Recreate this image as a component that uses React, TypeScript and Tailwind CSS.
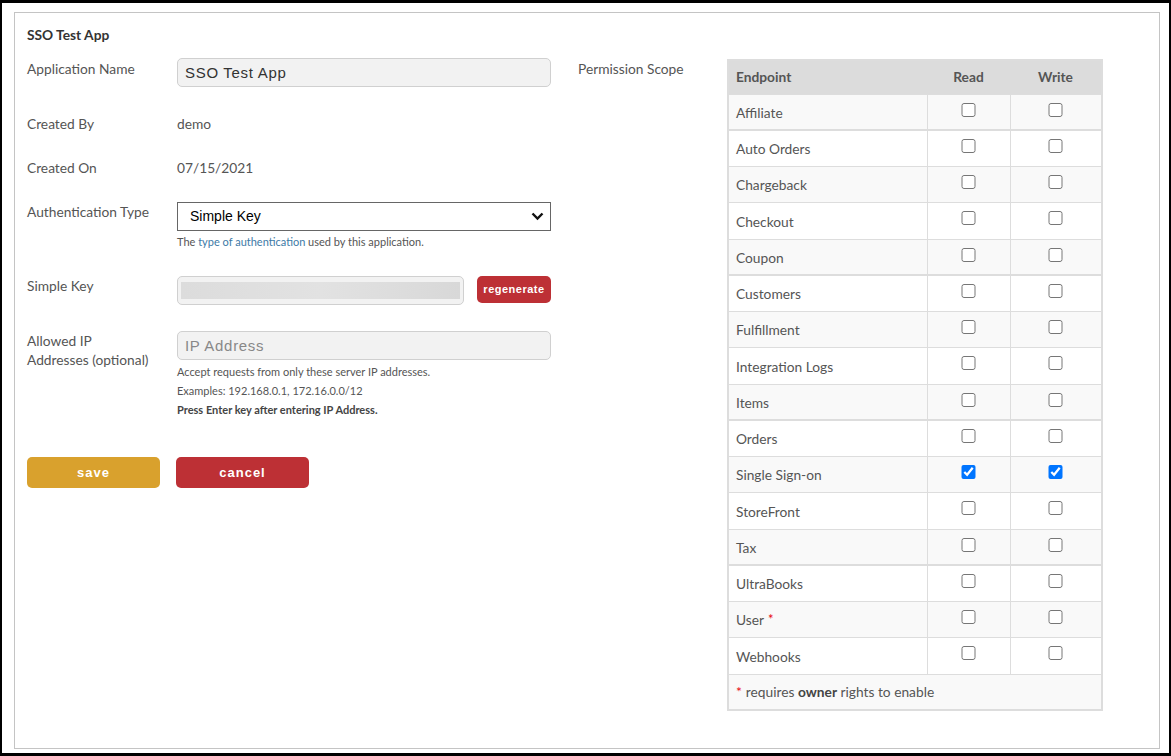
import { useState } from "react"

type Row = { name: string; read?: boolean; write?: boolean; owner?: boolean }

const groups: Row[][] = [
  [{ name: "Affiliate" }],
  [{ name: "Auto Orders" }, { name: "Chargeback" }, { name: "Checkout" }, { name: "Coupon" }],
  [{ name: "Customers" }, { name: "Fulfillment" }, { name: "Integration Logs" }, { name: "Items" }],
  [{ name: "Orders" }, { name: "Single Sign-on", read: true, write: true }, { name: "StoreFront" }, { name: "Tax" }],
  [{ name: "UltraBooks" }, { name: "User", owner: true }, { name: "Webhooks" }],
]

function Label({ children }: { children: React.ReactNode }) {
  return <div className="w-[150px] shrink-0 text-[13.75px] leading-5 text-[#555]">{children}</div>
}

function PermissionRow({ row, shaded, first }: { row: Row; shaded: boolean; first: boolean }) {
  const [read, setRead] = useState(!!row.read)
  const [write, setWrite] = useState(!!row.write)
  return (
    <tr className={`h-[36.25px] ${shaded ? "bg-[#f9f9f9]" : "bg-white"} ${first ? "border-t-2" : "border-t"} border-[#ddd]`}>
      <td className="border-r border-[#ddd] px-[7px] text-[13.75px] text-[#555] pt-[2px]">
        {row.name}
        {row.owner && <span className="text-red-600 ml-1 align-top text-[13px]">*</span>}
      </td>
      <td className="border-r border-[#ddd] text-center align-top pt-[8px]">
        <input type="checkbox" checked={read} onChange={() => setRead(!read)} className="m-0 w-[15px] h-[14px] align-top" />
      </td>
      <td className="text-center align-top pt-[8px]">
        <input type="checkbox" checked={write} onChange={() => setWrite(!write)} className="m-0 w-[15px] h-[14px] align-top" />
      </td>
    </tr>
  )
}

export default function App() {
  return (
    <div className="h-[756px] w-[1171px] bg-white border-x-2 border-y-[3px] border-black font-['Lato','Noto_Sans',sans-serif] overflow-hidden">
      <div className="ml-[12px] mr-[9px] mt-[9px] h-[737px] border border-[#c4c4c4] px-[12px] pt-[12px]">
        <div className="text-[13.75px] font-bold leading-5 text-[#333]">SSO Test App</div>

        <div className="flex gap-[27px] mt-[14px]">
          {/* Left form */}
          <div className="w-[524px] shrink-0">
            <div className="flex">
              <Label>Application Name</Label>
              <input
                defaultValue="SSO Test App"
                className="-mt-px h-[29px] w-[374px] rounded-[5px] border border-[#d0d0d0] bg-[#f2f2f2] px-[7px] font-['Liberation_Sans',Arial,sans-serif] text-[15px] tracking-[0.7px] text-[#333] outline-none"
              />
            </div>

            <div className="flex mt-[27px]">
              <Label>Created By</Label>
              <div className="text-[13.75px] leading-5 text-[#555]">demo</div>
            </div>

            <div className="flex mt-[24px]">
              <Label>Created On</Label>
              <div className="text-[13.75px] leading-5 text-[#555]">07/15/2021</div>
            </div>

            <div className="flex mt-[24px]">
              <Label>Authentication Type</Label>
              <div className="w-[374px]">
                <div className="relative h-[29px] border border-[#666] bg-white">
                  <div className="pl-[12px] leading-[27px] font-['Liberation_Sans',Arial,sans-serif] text-[14px] text-black">Simple Key</div>
                  <svg className="absolute right-[6px] top-[9px]" width="13" height="9" viewBox="0 0 13 9">
                    <path d="M1.5 1.5 L6.5 6.5 L11.5 1.5" fill="none" stroke="#111" strokeWidth="2.4" />
                  </svg>
                </div>
                <div className="mt-[4px] text-[11px] leading-[14px] text-[#555]">
                  The <span className="text-[#3d7aa6]">type of authentication</span> used by this application.
                </div>
              </div>
            </div>

            <div className="flex mt-[27px]">
              <Label>Simple Key</Label>
              <div className="flex gap-[13px] items-start">
                <div className="h-[29px] w-[287px] rounded-[5px] border border-[#d0d0d0] bg-[#f2f2f2] px-[3px] py-[5px]">
                  <div className="h-full w-full bg-gradient-to-r from-[#dcdcdc] via-[#e2e2e2] to-[#d8d8d8] blur-[0.5px]" />
                </div>
                <button className="h-[27px] w-[74px] rounded-[5px] bg-[#bd3035] font-['Liberation_Sans',Arial,sans-serif] text-[11px] font-bold tracking-[0.5px] text-white">
                  regenerate
                </button>
              </div>
            </div>

            <div className="flex mt-[26px]">
              <div className="w-[150px] shrink-0 text-[13.75px] leading-[19px] text-[#555]">
                Allowed IP
                <br />
                Addresses (optional)
              </div>
              <div className="w-[374px]">
                <input
                  placeholder="IP Address"
                  className="h-[29px] w-full rounded-[5px] border border-[#d0d0d0] bg-[#f2f2f2] px-[7px] font-['Liberation_Sans',Arial,sans-serif] text-[15px] tracking-[0.7px] text-[#333] placeholder:text-[#888] outline-none"
                />
                <div className="mt-[2px] text-[11px] leading-[19px] text-[#555]">
                  <div>Accept requests from only these server IP addresses.</div>
                  <div>Examples: 192.168.0.1, 172.16.0.0/12</div>
                  <div className="font-bold text-[#444]">Press Enter key after entering IP Address.</div>
                </div>
              </div>
            </div>

            <div className="flex gap-[16px] mt-[38px]">
              <button className="h-[31px] w-[133px] rounded-[5px] bg-[#d9a12d] font-['Liberation_Sans',Arial,sans-serif] text-[13px] font-bold tracking-[1px] text-white">
                save
              </button>
              <button className="h-[31px] w-[133px] rounded-[5px] bg-[#bd3035] font-['Liberation_Sans',Arial,sans-serif] text-[13px] font-bold tracking-[1px] text-white">
                cancel
              </button>
            </div>
          </div>

          {/* Right: permissions */}
          <div className="flex items-start">
            <div className="w-[149px] shrink-0 text-[13.75px] leading-5 text-[#555]">Permission Scope</div>
            <table className="w-[374px] border-collapse border-2 border-[#ddd] table-fixed">
              <colgroup>
                <col className="w-[199px]" />
                <col className="w-[83px]" />
                <col className="w-[92px]" />
              </colgroup>
              <thead>
                <tr className="h-[34px] bg-[#dcdcdc] text-[13.75px] text-[#555]">
                  <th className="px-[7px] text-left font-bold">Endpoint</th>
                  <th className="text-center font-bold">Read</th>
                  <th className="text-center font-bold">Write</th>
                </tr>
              </thead>
              {groups.map((g, gi) => (
                <tbody key={gi}>
                  {g.map((row, ri) => (
                    <PermissionRow
                      key={row.name}
                      row={row}
                      first={ri === 0 && gi > 0}
                      shaded={gi === 0 ? true : ri % 2 === 1}
                    />
                  ))}
                  {gi === groups.length - 1 && (
                    <tr className="h-[36.25px] bg-[#f9f9f9] border-t border-[#ddd]">
                      <td colSpan={3} className="px-[7px] text-[13.75px] text-[#555]">
                        <span className="text-red-600 align-top mr-1">*</span>requires <b className="text-[#444]">owner</b> rights to enable
                      </td>
                    </tr>
                  )}
                </tbody>
              ))}
            </table>
          </div>
        </div>
      </div>
    </div>
  )
}
